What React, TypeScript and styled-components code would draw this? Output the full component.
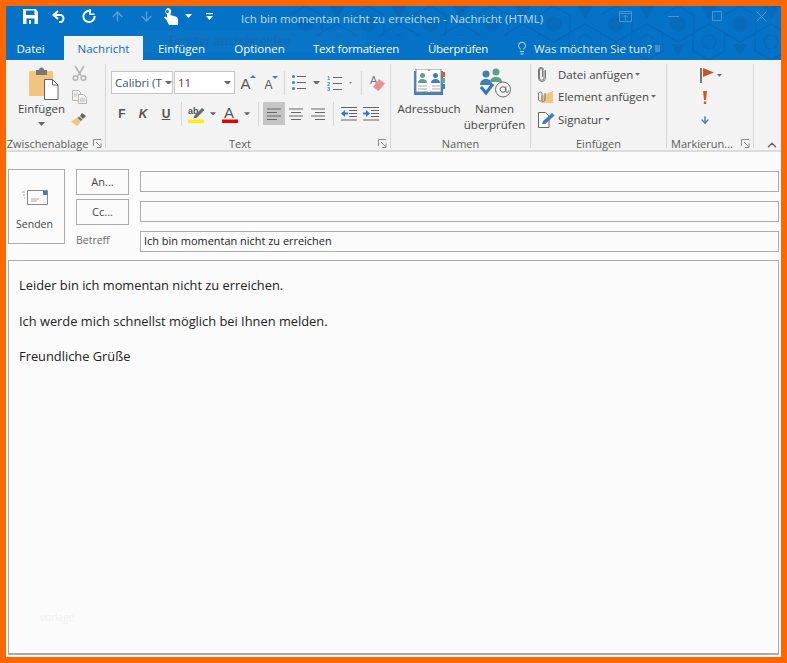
import React from "react";
import styled, { createGlobalStyle } from "styled-components";
import { ArrowUp, ArrowDown, Lightbulb, ChevronUp } from "lucide-react";

const GlobalStyle = createGlobalStyle`
  html, body {
    margin: 0;
    padding: 0;
    background: #ff6600;
  }
  body {
    font-family: "Open Sans", "Noto Sans", "Liberation Sans", sans-serif;
  }
`;

const Frame = styled.div`
  box-sizing: border-box;
  width: 787px;
  height: 663px;
  border: 6px solid #ff6600;
  background: #fbfbfb;
  display: flex;
  flex-direction: column;
  overflow: hidden;
`;

const Head = styled.div`
  position: relative;
  flex: none;
  background: #0472c6;
`;

const Pattern = styled.svg`
  position: absolute;
  top: 0;
  right: 0;
  width: 490px;
  height: 54px;
  clip-path: polygon(0 0, 100% 0, 100% 100%, 62% 100%, 50% 55%, 0 55%);
`;

const Ghost = styled.div`
  position: absolute;
  left: 131px;
  top: 24px;
  width: 230px;
  height: 22px;
  background: rgba(255, 255, 255, 0.025);
  color: #1768b0;
  font-size: 12px;
  line-height: 22px;
  padding-left: 32px;
  box-sizing: border-box;
`;

const TitleBar = styled.div`
  position: relative;
  height: 30px;
  display: flex;
  align-items: flex-start;
`;

const Quick = styled.div<{ $w: number; $dim?: boolean }>`
  width: ${(p) => p.$w}px;
  height: 20px;
  color: #fff;
  opacity: ${(p) => (p.$dim ? 0.3 : 1)};
  display: flex;
  align-items: center;
  justify-content: center;
  flex: none;
`;

const Title = styled.div`
  position: absolute;
  left: 235px;
  top: 5px;
  color: #c3dcf1;
  font-size: 11.6px;
  line-height: 16px;
  white-space: nowrap;
`;

const WindowButtons = styled.div`
  position: absolute;
  left: 597px;
  top: 0;
  display: flex;
`;

const WindowButton = styled.div<{ $w: number }>`
  width: ${(p) => p.$w}px;
  height: 20px;
  display: flex;
  align-items: center;
  justify-content: center;
  color: #4b95d3;
`;

const TabBar = styled.div`
  position: relative;
  height: 24px;
  display: flex;
  align-items: stretch;
`;

const Tab = styled.div<{ $w: number; $active?: boolean; $gap?: number; $track?: number }>`
  width: ${(p) => p.$w}px;
  margin-right: ${(p) => p.$gap ?? 0}px;
  letter-spacing: ${(p) => p.$track ?? 0}px;
  flex: none;
  display: flex;
  align-items: center;
  justify-content: center;
  font-size: 11.5px;
  white-space: nowrap;
  color: ${(p) => (p.$active ? "#0a6cc0" : "#fff")};
  background: ${(p) => (p.$active ? "#f3f3f3" : "transparent")};
`;

const TellMe = styled.div`
  display: flex;
  align-items: center;
  gap: 5px;
  margin-left: 12px;
  color: #e6f1fa;
  font-size: 11.5px;
  white-space: nowrap;
`;

const Selection = styled.span`
  width: 5px;
  height: 7px;
  margin-left: -2px;
  background: #3f8fd6;
`;

const Ribbon = styled.div`
  flex: none;
  height: 84px;
  padding: 4px 0 2px;
  background: #f3f3f3;
  border-bottom: 2px solid #dcdcdc;
  display: flex;
`;

const Group = styled.div<{ $w: number }>`
  width: ${(p) => p.$w}px;
  flex: none;
  box-sizing: border-box;
  border-right: 1px solid #d6d6d6;
  display: flex;
  flex-direction: column;
`;

const GroupBody = styled.div<{ $pad?: number }>`
  flex: 1;
  display: flex;
  padding-left: ${(p) => p.$pad ?? 0}px;
  min-height: 0;
`;

const GroupFoot = styled.div`
  height: 15px;
  padding-bottom: 1px;
  margin-bottom: -4px;
  display: flex;
  align-items: center;
  color: #5c5c5c;
  font-size: 11px;
  white-space: nowrap;
`;

const FootText = styled.div`
  flex: 1;
  min-width: 0;
  display: flex;
  justify-content: center;
`;

const Launcher = styled.div`
  width: 16px;
  flex: none;
  display: flex;
  justify-content: center;
`;

const BigButton = styled.div<{ $w: number; $left?: number }>`
  width: ${(p) => p.$w}px;
  margin-left: ${(p) => p.$left ?? 0}px;
  display: flex;
  flex-direction: column;
  align-items: center;
  flex: none;
`;

const BigIcon = styled.div<{ $top: number; $shift?: number }>`
  height: 37px;
  padding-top: ${(p) => p.$top}px;
  padding-left: ${(p) => p.$shift ?? 0}px;
  box-sizing: border-box;
  display: flex;
  align-items: flex-start;
  justify-content: center;
`;

const BigLabel = styled.div`
  font-size: 11.5px;
  line-height: 16px;
  color: #444;
  text-align: center;
  white-space: nowrap;
`;

const PasteCaret = styled.div`
  margin-top: 5px;
  display: flex;
`;

const SmallColumn = styled.div`
  width: 16px;
  padding-top: 1px;
  display: flex;
  flex-direction: column;
  align-items: center;
  gap: 8.5px;
`;

const ToolRows = styled.div`
  display: flex;
  flex-direction: column;
  gap: 8px;
  padding-top: 7px;
`;

const ToolRow = styled.div`
  height: 23px;
  display: flex;
  align-items: center;
`;

const Combo = styled.div<{ $w: number; $ink: string }>`
  width: ${(p) => p.$w}px;
  height: 23px;
  box-sizing: border-box;
  margin-right: 1px;
  border: 1px solid #c6c6c6;
  background: #fff;
  color: ${(p) => p.$ink};
  font-size: 11.5px;
  line-height: 21px;
  padding-left: 3px;
  display: flex;
  align-items: center;
  justify-content: space-between;
  overflow: hidden;
  white-space: nowrap;
  flex: none;
`;

const ComboArrow = styled.span`
  flex: none;
  background: #fff;
  width: 13px;
  height: 100%;
  display: flex;
  align-items: center;
  justify-content: center;
`;

const Cell = styled.div<{ $w: number; $active?: boolean }>`
  width: ${(p) => p.$w}px;
  height: 23px;
  flex: none;
  display: flex;
  align-items: center;
  justify-content: center;
  background: ${(p) => (p.$active ? "#c5c5c5" : "transparent")};
`;

const Divider = styled.div`
  width: 1px;
  height: 24px;
  margin: 0 1.5px;
  flex: none;
  background: #d4d4d4;
`;

const Letter = styled.span<{ $italic?: boolean; $under?: boolean }>`
  font-family: "Liberation Sans", sans-serif;
  font-weight: 700;
  font-size: 12px;
  color: #555;
  font-style: ${(p) => (p.$italic ? "italic" : "normal")};
  text-decoration: ${(p) => (p.$under ? "underline" : "none")};
`;

const GrowGlyph = styled.span<{ $size: number; $drop: number }>`
  display: flex;
  align-items: flex-start;
  font-family: "Liberation Sans", sans-serif;
  font-size: ${(p) => p.$size}px;
  line-height: ${(p) => p.$size}px;
  color: #555;
  padding-top: ${(p) => p.$drop}px;

  svg {
    margin: -${(p) => p.$drop - 1}px 0 0 -1px;
  }
`;

const Stacked = styled.div`
  display: flex;
  flex-direction: column;
  padding-left: 7px;
  margin-top: -1px;
`;

const ListRow = styled.div`
  height: 22.5px;
  display: flex;
  align-items: center;
  color: #444;
  font-size: 11.5px;
  white-space: nowrap;
`;

const ListIcon = styled.span`
  width: 20px;
  flex: none;
  display: flex;
  align-items: center;
`;

const Trail = styled.span`
  margin-left: 2px;
  display: flex;
`;

const FlagColumn = styled.div`
  display: flex;
  flex-direction: column;
  padding-left: 33px;
`;

const FlagRow = styled.div`
  height: 22.5px;
  display: flex;
  align-items: center;
  gap: 2px;
`;

const FlagIcon = styled.span<{ $w: number }>`
  width: ${(p) => p.$w}px;
  flex: none;
  display: flex;
  justify-content: center;
`;

const CollapseCell = styled.div`
  flex: 1;
  margin-bottom: -4px;
  padding: 0 0 0 8px;
  display: flex;
  align-items: flex-end;
  justify-content: center;
  color: #666;
`;

const Compose = styled.div`
  flex: 1;
  min-height: 0;
  display: flex;
  flex-direction: column;
  padding: 17px 2px 2px;
`;

const Fields = styled.div`
  display: grid;
  grid-template-columns: 57px 53px 1fr;
  grid-template-rows: repeat(3, 30px);
  column-gap: 11px;
`;

const SendButton = styled.button`
  grid-row: 1 / 4;
  grid-column: 1;
  width: 57px;
  height: 75px;
  box-sizing: border-box;
  border: 1px solid #ababab;
  background: #fbfbfb;
  color: #444;
  font: inherit;
  font-size: 10.5px;
  padding: 20px 4px 0 0;
  display: flex;
  flex-direction: column;
  align-items: center;
  justify-content: flex-start;
  gap: 12px;
`;

const AddressButton = styled.button`
  grid-column: 2;
  height: 26px;
  box-sizing: border-box;
  border: 1px solid #ababab;
  background: #fbfbfb;
  color: #444;
  font: inherit;
  font-size: 11px;
  padding: 0 0 2px;
`;

const FieldLabel = styled.div`
  grid-column: 2;
  color: #6a6a6a;
  font-size: 10.5px;
  line-height: 15px;
  margin-top: 4px;
`;

const Field = styled.div`
  grid-column: 3;
  height: 21px;
  margin-top: 2px;
  box-sizing: border-box;
  border: 1px solid #ababab;
  background: #fbfbfb;
  color: #222;
  font-size: 10.95px;
  line-height: 17px;
  padding-left: 3px;
`;

const Body = styled.div`
  position: relative;
  flex: 1;
  margin-top: 1px;
  box-sizing: border-box;
  border: 1px solid #ababab;
  border-bottom-width: 2px;
  padding: 16px 10px;
  color: #222;
  font-size: 12.85px;
`;

const Para = styled.p`
  margin: 0 0 18px;
  line-height: 17.5px;
`;

const Watermark = styled.span`
  position: absolute;
  left: 31px;
  top: 349px;
  color: #efefef;
  font-size: 10px;
`;

const Caret = ({ color = "#666", size = 7 }: { color?: string; size?: number }) => (
  <svg width={size} height={size * 0.57} viewBox="0 0 7 4">
    <path d="M0 0h7L3.5 4z" fill={color} />
  </svg>
);

const Corner = () => (
  <svg width="9" height="9" viewBox="0 0 9 9" fill="none" stroke="#8a8a8a">
    <path d="M.5 7V.5H8" />
    <path d="M3 3l4.5 4.5M8 4.5v4H4" />
  </svg>
);

const SaveIcon = () => (
  <svg width="15" height="15" viewBox="0 0 15 15">
    <path d="M0 0h12.500L15 2.500V15H0z" fill="#fff" />
    <path d="M3 1.500h8.500v4.500H3z" fill="#0472c6" />
    <path d="M3.500 9.500h8V15h-8z" fill="#0472c6" />
    <path d="M6 11h2v4H6z" fill="#fff" />
  </svg>
);

const UndoIcon = () => (
  <svg width="15" height="13" viewBox="0 0 15 13" fill="none" stroke="#fff" strokeWidth="2">
    <path d="M6 1L1.500 5 6 9" />
    <path d="M2 5h7.500a4 4 0 0 1 0 7H7" />
  </svg>
);

const RedoIcon = () => (
  <svg width="14" height="14" viewBox="0 0 14 14" fill="none" stroke="#fff" strokeWidth="2">
    <path d="M9 2.200A5.600 5.600 0 1 0 12.600 7" />
    <path d="M8 0v5.200h4.600" strokeWidth="1.600" />
  </svg>
);

const TouchIcon = () => (
  <svg width="14" height="17" viewBox="0 0 14 17">
    <path d="M3.500 0a3.500 3.500 0 0 1 3 5.500V7l5 1.500c1.500.5 2.500 1.500 2.500 3V17H5L2.500 12 0 9.500l1-1 2 1V6.200A3.500 3.500 0 0 1 3.500 0z" fill="#fff" />
    <circle cx="3.500" cy="3.500" r="1.500" fill="#0472c6" />
  </svg>
);

const MoreIcon = () => (
  <svg width="7" height="7" viewBox="0 0 7 7" fill="#fff">
    <path d="M0 0h7v1.200H0z" />
    <path d="M0 3h7L3.500 7z" />
  </svg>
);

const PasteIcon = () => (
  <svg width="30" height="33" viewBox="0 0 30 33">
    <path d="M1 4h22a1 1 0 0 1 1 1v24H1a1 1 0 0 1-1-1V5a1 1 0 0 1 1-1z" fill="#efc57f" />
    <path d="M7 3h3a2.500 2.500 0 0 1 5 0h3v5H7z" fill="#777" />
    <path d="M15.500 12.500h8l5.500 5.500v14.500H15.500z" fill="#fff" stroke="#666" />
    <path d="M23.500 12.500V18H29" fill="none" stroke="#666" />
  </svg>
);

const CutIcon = () => (
  <svg width="15" height="16" viewBox="0 0 15 16" fill="none" stroke="#b5b5b5" strokeWidth="1.600">
    <path d="M3 1l6 9.500M12 1L6 10.500" />
    <circle cx="3.500" cy="13" r="2.300" />
    <circle cx="11.500" cy="13" r="2.300" />
  </svg>
);

const CopyIcon = () => (
  <svg width="15" height="14" viewBox="0 0 15 14" fill="#f3f3f3" stroke="#b5b5b5">
    <path d="M.5.500h6l2 2v8h-8z" />
    <path d="M6.500 4.500h5l3 3v6h-8z" />
    <path d="M2 4h4M2 6h3M8 9h5M8 11h5" />
  </svg>
);

const BrushIcon = () => (
  <svg width="16" height="15" viewBox="0 0 16 15">
    <path d="M11 1l4 3-3 3-3-3z" fill="#666" />
    <path d="M8 4.500l3.500 3L6 14 0 9.500z" fill="#efc57f" />
    <path d="M8 4.500l3.500 3-1.500 1.500-3.500-3z" fill="#777" />
  </svg>
);

const BulletsIcon = () => (
  <svg width="14" height="15" viewBox="0 0 14 15">
    <circle cx="1.500" cy="1.500" r="1.500" fill="#3f7fbd" />
    <circle cx="1.500" cy="7.500" r="1.500" fill="#3f7fbd" />
    <circle cx="1.500" cy="13.500" r="1.500" fill="#3f7fbd" />
    <path d="M5 1h9v1H5zM5 7h9v1H5zM5 13h9v1H5z" fill="#666" />
  </svg>
);

const NumbersIcon = () => (
  <svg width="16" height="16" viewBox="0 0 16 16">
    <text x="0" y="5" fontSize="5.500" fontWeight="700" fill="#3f7fbd" fontFamily="Liberation Sans">1</text>
    <text x="0" y="10.500" fontSize="5.500" fontWeight="700" fill="#3f7fbd" fontFamily="Liberation Sans">2</text>
    <text x="0" y="16" fontSize="5.500" fontWeight="700" fill="#3f7fbd" fontFamily="Liberation Sans">3</text>
    <path d="M6 2h9v1H6zM6 8h9v1H6zM6 14h9v1H6z" fill="#666" />
  </svg>
);

const EraserIcon = () => (
  <svg width="17" height="18" viewBox="0 0 17 18">
    <text x="1" y="10" fontSize="11" fill="#777" fontFamily="Liberation Sans">A</text>
    <path d="M10 5l6 4.500-6.500 7.500-5.500-4z" fill="#ee8d93" />
  </svg>
);

const SizeArrow = ({ up }: { up: boolean }) => (
  <svg width="6" height="3" viewBox="0 0 6 3">
    <path d={up ? "M0 3l3-3 3 3z" : "M0 0h6L3 3z"} fill="#3f7fbd" />
  </svg>
);

const HighlightIcon = () => (
  <svg width="17" height="18" viewBox="0 0 17 18">
    <text x="0" y="9" fontSize="9" fontWeight="700" fill="#555" fontFamily="Liberation Sans">ab</text>
    <path d="M6 11l8-8 2.500 2-8 8H6z" fill="#6b6b6b" />
    <path d="M0 14.500h16V18H0z" fill="#ffee00" />
  </svg>
);

const FontColorIcon = () => (
  <svg width="17" height="18" viewBox="0 0 17 18">
    <text x="2" y="13" fontSize="15" fill="#555" fontFamily="Liberation Sans">A</text>
    <path d="M0 14.500h16V18H0z" fill="#ee0000" />
  </svg>
);

const AlignIcon = ({ kind }: { kind: "left" | "center" | "right" }) => {
  const rows = [14, 10, 14, 10];
  return (
    <svg width="14" height="12" viewBox="0 0 14 12" fill="#666">
      {rows.map((w, i) => {
        const x = kind === "left" ? 0 : kind === "center" ? (14 - w) / 2 : 14 - w;
        return <rect key={i} x={x} y={i * 3.5 + 0.5} width={w} height="1" />;
      })}
    </svg>
  );
};

const IndentIcon = ({ out }: { out: boolean }) => (
  <svg width="16" height="14" viewBox="0 0 16 14">
    <path d="M0 0h16v1H0zM8 3h8v1H8zM8 6h8v1H8zM8 9h8v1H8zM0 12.500h16v1H0z" fill="#666" />
    <path d={out ? "M0 6.500L4 3v2.500h3v2H4V10z" : "M7 6.500L3 3v2.500H0v2h3V10z"} fill="#2f78c0" />
  </svg>
);

const AddressBookIcon = () => (
  <svg width="31" height="26" viewBox="0 0 31 26">
    <path d="M0 2h29v24H0z" fill="#3f7fbd" />
    <path d="M2 0h12l1 2 1-2h11v23H16l-1 1-1-1H2z" fill="#fff" stroke="#8a8a8a" />
    <path d="M28 3h3v5h-3z" fill="#c9603a" />
    <path d="M28 9h3v5h-3z" fill="#6fa58e" />
    <path d="M28 15h3v5h-3z" fill="#3f7fbd" />
    <circle cx="8.500" cy="6.500" r="2.500" fill="#5f9f88" />
    <path d="M4 14c0-3 2-4 4.500-4s4.500 1 4.500 4z" fill="#5f9f88" />
    <circle cx="21.500" cy="6.500" r="2.500" fill="#3f7fbd" />
    <path d="M17 14c0-3 2-4 4.500-4s4.500 1 4.500 4z" fill="#3f7fbd" />
    <path d="M4 17h9M4 20h9M18 17h8M18 20h8" stroke="#aaa" />
  </svg>
);

const CheckNamesIcon = () => (
  <svg width="31" height="30" viewBox="0 0 31 30">
    <circle cx="6" cy="6" r="3.500" fill="#3f7fbd" />
    <path d="M0 17c0-4 2.500-6 6-6s6 2 6 6z" fill="#3f7fbd" />
    <circle cx="16" cy="4" r="3.500" fill="#5f9f88" />
    <path d="M10 14c0-3 2.500-5 6-5s6 2 6 5z" fill="#5f9f88" />
    <path d="M1 19l5 6 7-9" fill="none" stroke="#2f78c0" strokeWidth="3" />
    <circle cx="23" cy="21.500" r="7.500" fill="#f3f3f3" stroke="#666" />
    <circle cx="23" cy="21.500" r="2.800" fill="none" stroke="#666" />
    <path d="M25.800 18.500v4.500c0 2 2.500 2 2.700-.5" fill="none" stroke="#666" />
  </svg>
);

const ClipIcon = () => (
  <svg width="8" height="15" viewBox="0 0 8 15" fill="none" stroke="#777">
    <path d="M6 3.500V11a2.200 2.200 0 0 1-4.500 0V3a1.500 1.500 0 0 1 3 0v7" />
    <path d="M7.500 3v8a3.500 3.500 0 0 1-7 0V3a2.500 2.500 0 0 1 5 0" />
  </svg>
);

const AttachItemIcon = () => (
  <svg width="15" height="14" viewBox="0 0 15 14">
    <path d="M3 6l12-5v12H3z" fill="#efc57f" />
    <path d="M4 3v7a2 2 0 0 1-3.500 0V3a2 2 0 0 1 3.500 0M7 3v7a2 2 0 0 1-3 1" fill="none" stroke="#777" />
  </svg>
);

const SignatureIcon = () => (
  <svg width="17" height="17" viewBox="0 0 17 17">
    <path d="M.5 1.500h7l3.500 3.500v11.500H.5z" fill="#fff" stroke="#666" />
    <path d="M4 13l1-3 9-8 2.500 2.500-9 8.500z" fill="#3f7fbd" />
  </svg>
);

const FlagIconShape = () => (
  <svg width="15" height="15" viewBox="0 0 15 15">
    <path d="M0 0h2v15H0z" fill="#777" />
    <path d="M3 0l11 4.500L3 9z" fill="#c8542a" />
  </svg>
);

const ImportantIcon = () => (
  <svg width="4" height="13" viewBox="0 0 4 13" fill="#d0542c">
    <path d="M0 0h4L3 9H1z" />
    <path d="M.8 10.500h2.400V13H.8z" />
  </svg>
);

const SendIcon = () => (
  <svg width="27" height="15" viewBox="0 0 27 15" fill="none" stroke="#888">
    <path d="M6.500.500h20v14h-20z" fill="#fbfbfb" />
    <path d="M1 2h3M2 5h2M3 8h1M10 9h8M10 11h6" stroke="#aaa" />
    <path d="M22 1h4v4h-4z" fill="#3f7fbd" stroke="none" />
  </svg>
);

const App: React.FC = () => {
  return (
    <Frame>
      <GlobalStyle />
      <Head>
        <Pattern viewBox="0 0 490 54">
          <defs>
            <pattern id="hex" width="62" height="54" patternUnits="userSpaceOnUse">
              <path d="M15 0l16 9v18l-16 9-16-9V9zM46 18l16 9v18l-16 9-16-9V27z" fill="none" stroke="#0866b4" strokeWidth="1.200" />
              <circle cx="15" cy="18" r="8" fill="#0866b4" opacity="0.6" />
              <path d="M38 0h16l-8 13zM8 38h14l-7 12z" fill="#0866b4" opacity="0.7" />
              <circle cx="46" cy="36" r="7" fill="none" stroke="#0866b4" />
            </pattern>
          </defs>
          <rect width="490" height="54" fill="url(#hex)" />
        </Pattern>
        <Ghost>Fenster ausschneiden</Ghost>
        <TitleBar>
          <Quick $w={11} />
          <Quick $w={27}><SaveIcon /></Quick>
          <Quick $w={30}><UndoIcon /></Quick>
          <Quick $w={29}><RedoIcon /></Quick>
          <Quick $w={29} $dim><ArrowUp size={15} strokeWidth={2.5} /></Quick>
          <Quick $w={29} $dim><ArrowDown size={15} strokeWidth={2.5} /></Quick>
          <Quick $w={20}><TouchIcon /></Quick>
          <Quick $w={14}><Caret color="#fff" /></Quick>
          <Quick $w={28}><MoreIcon /></Quick>
          <Title>Ich bin momentan nicht zu erreichen - Nachricht (HTML)</Title>
          <WindowButtons>
            <WindowButton $w={45}>
              <svg width="13" height="11" viewBox="0 0 13 11" fill="none" stroke="currentColor">
                <path d="M.5.500h12v10H.5zM.5 2.500h12M6.500 9V4.500M4.500 6l2-2 2 2" />
              </svg>
            </WindowButton>
            <WindowButton $w={50}>
              <svg width="11" height="1" viewBox="0 0 11 1"><path d="M0 0h11v1H0z" fill="currentColor" /></svg>
            </WindowButton>
            <WindowButton $w={38}>
              <svg width="10" height="10" viewBox="0 0 10 10" fill="none" stroke="currentColor"><path d="M.5.500h9v9h-9z" /></svg>
            </WindowButton>
            <WindowButton $w={50}>
              <svg width="11" height="11" viewBox="0 0 11 11" stroke="currentColor"><path d="M.5.500l10 10M10.500.500l-10 10" /></svg>
            </WindowButton>
          </WindowButtons>
        </TitleBar>
        <TabBar>
          <Tab $w={49} $gap={9}>Datei</Tab>
          <Tab $w={79} $active>Nachricht</Tab>
          <Tab $w={77}>Einfügen</Tab>
          <Tab $w={79}>Optionen</Tab>
          <Tab $w={114} $track={-0.25}>Text formatieren</Tab>
          <Tab $w={90} $track={-0.25}>Überprüfen</Tab>
          <TellMe>
            <Lightbulb size={14} strokeWidth={1.5} />
            Was möchten Sie tun?
            <Selection />
          </TellMe>
        </TabBar>
      </Head>
      <Ribbon>
        <Group $w={100}>
          <GroupBody>
            <BigButton $w={59} $left={6}>
              <BigIcon $top={3} $shift={4}><PasteIcon /></BigIcon>
              <BigLabel>Einfügen</BigLabel>
              <PasteCaret><Caret /></PasteCaret>
            </BigButton>
            <SmallColumn>
              <CutIcon />
              <CopyIcon />
              <BrushIcon />
            </SmallColumn>
          </GroupBody>
          <GroupFoot>
            <FootText>Zwischenablage</FootText>
            <Launcher><Corner /></Launcher>
          </GroupFoot>
        </Group>
        <Group $w={285}>
          <GroupBody $pad={5}>
            <ToolRows>
              <ToolRow>
                <Combo $w={62} $ink="#3c4f7a">Calibri (T<ComboArrow><Caret /></ComboArrow></Combo>
                <Combo $w={61} $ink="#6b3030">11<ComboArrow><Caret /></ComboArrow></Combo>
                <Cell $w={24}><GrowGlyph $size={15} $drop={2}>A<SizeArrow up /></GrowGlyph></Cell>
                <Cell $w={22}><GrowGlyph $size={12} $drop={4}>A<SizeArrow up={false} /></GrowGlyph></Cell>
                <Divider />
                <Cell $w={26}><BulletsIcon /></Cell>
                <Cell $w={9}><Caret /></Cell>
                <Cell $w={28}><NumbersIcon /></Cell>
                <Cell $w={3}><Caret /></Cell>
                <Cell $w={7} />
                <Divider />
                <Cell $w={28}><EraserIcon /></Cell>
              </ToolRow>
              <ToolRow>
                <Cell $w={22}><Letter>F</Letter></Cell>
                <Cell $w={20}><Letter $italic>K</Letter></Cell>
                <Cell $w={26}><Letter $under>U</Letter></Cell>
                <Divider />
                <Cell $w={27}><HighlightIcon /></Cell>
                <Cell $w={6}><Caret /></Cell>
                <Cell $w={28}><FontColorIcon /></Cell>
                <Cell $w={6}><Caret /></Cell>
                <Cell $w={6} />
                <Divider />
                <Cell $w={3} />
                <Cell $w={22} $active><AlignIcon kind="left" /></Cell>
                <Cell $w={22}><AlignIcon kind="center" /></Cell>
                <Cell $w={22}><AlignIcon kind="right" /></Cell>
                <Cell $w={2} />
                <Divider />
                <Cell $w={28}><IndentIcon out /></Cell>
                <Cell $w={16}><IndentIcon out={false} /></Cell>
              </ToolRow>
            </ToolRows>
          </GroupBody>
          <GroupFoot>
            <FootText>Text</FootText>
            <Launcher><Corner /></Launcher>
          </GroupFoot>
        </Group>
        <Group $w={140}>
          <GroupBody>
            <BigButton $w={76}>
              <BigIcon $top={5}><AddressBookIcon /></BigIcon>
              <BigLabel>Adressbuch</BigLabel>
            </BigButton>
            <BigButton $w={55}>
              <BigIcon $top={4} $shift={2}><CheckNamesIcon /></BigIcon>
              <BigLabel>Namen<br />überprüfen</BigLabel>
            </BigButton>
          </GroupBody>
          <GroupFoot><FootText>Namen</FootText></GroupFoot>
        </Group>
        <Group $w={136}>
          <GroupBody>
            <Stacked>
              <ListRow><ListIcon><ClipIcon /></ListIcon>Datei anfügen<Trail><Caret size={5} /></Trail></ListRow>
              <ListRow><ListIcon><AttachItemIcon /></ListIcon>Element anfügen<Trail><Caret size={5} /></Trail></ListRow>
              <ListRow><ListIcon><SignatureIcon /></ListIcon>Signatur<Trail><Caret size={5} /></Trail></ListRow>
            </Stacked>
          </GroupBody>
          <GroupFoot><FootText>Einfügen</FootText></GroupFoot>
        </Group>
        <Group $w={87}>
          <GroupBody>
            <FlagColumn>
              <FlagRow><FlagIcon $w={15}><FlagIconShape /></FlagIcon><Caret size={5} /></FlagRow>
              <FlagRow><FlagIcon $w={10}><ImportantIcon /></FlagIcon></FlagRow>
              <FlagRow><FlagIcon $w={10}><ArrowDown size={14} color="#3f7fbd" strokeWidth={3.5} /></FlagIcon></FlagRow>
            </FlagColumn>
          </GroupBody>
          <GroupFoot>
            <FootText>Markierun...</FootText>
            <Launcher><Corner /></Launcher>
          </GroupFoot>
        </Group>
        <CollapseCell><ChevronUp size={14} strokeWidth={2.5} /></CollapseCell>
      </Ribbon>
      <Compose>
        <Fields>
          <SendButton><SendIcon />Senden</SendButton>
          <AddressButton>An...</AddressButton>
          <Field />
          <AddressButton>Cc...</AddressButton>
          <Field />
          <FieldLabel>Betreff</FieldLabel>
          <Field>Ich bin momentan nicht zu erreichen</Field>
        </Fields>
        <Body>
          <Para>Leider bin ich momentan nicht zu erreichen.</Para>
          <Para>Ich werde mich schnellst möglich bei Ihnen melden.</Para>
          <Para>Freundliche Grüße</Para>
          <Watermark>vorlage</Watermark>
        </Body>
      </Compose>
    </Frame>
  );
};

export default App;
